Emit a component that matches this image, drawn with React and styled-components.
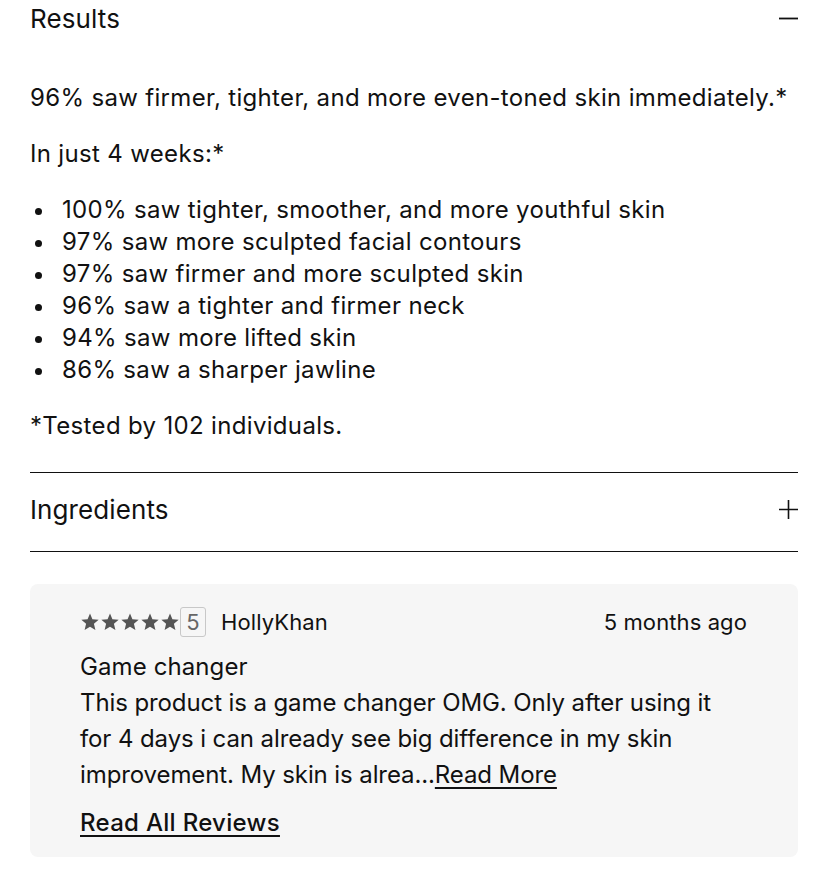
import React from "react";
import styled, { createGlobalStyle } from "styled-components";

const GlobalStyle = createGlobalStyle`
  body {
    margin: 0;
    background: #fff;
    color: #111;
    font-family: Inter, "Liberation Sans", sans-serif;
  }
`;

const Page = styled.div`
  padding: 0 30px;
`;

const Section = styled.div`
  border-bottom: ${({ last }) => (last ? "1px solid #111" : "none")};
  border-top: ${({ divided }) => (divided ? "1px solid #111" : "none")};
`;

const Header = styled.div`
  display: flex;
  align-items: center;
  justify-content: space-between;
  box-sizing: border-box;
  height: ${({ h }) => h}px;
  padding-bottom: ${({ lift = 0 }) => lift}px;
  font-size: 26px;
  letter-spacing: 0.1px;
`;

const Body = styled.div`
  font-size: 24px;
  line-height: 32px;
  padding: 46px 0 30px;
  letter-spacing: 0.33px;
`;

const Para = styled.p`
  margin: 0 0 24px;
  &:last-child {
    margin-bottom: 0;
  }
`;

const List = styled.ul`
  margin: 0 0 24px;
  padding: 0;
  list-style: none;
`;

const Item = styled.li`
  display: flex;
  align-items: center;
  &::before {
    content: "";
    flex: none;
    width: 7px;
    height: 7px;
    margin: 2px 20px 0 5px;
    border-radius: 50%;
    background: #111;
  }
`;

const Card = styled.div`
  margin-top: 32px;
  background: #f6f6f6;
  border-radius: 8px;
  padding: 22px 51px 18px 50px;
`;

const Meta = styled.div`
  display: flex;
  align-items: center;
  height: 32px;
  font-size: 22px;
  letter-spacing: 0.1px;
`;

const Stars = styled.div`
  display: flex;
  color: #555;
`;

const Badge = styled.span`
  display: inline-flex;
  align-items: flex-end;
  justify-content: center;
  box-sizing: border-box;
  width: 26px;
  height: 30px;
  border: 1.5px solid #c8c8c8;
  border-radius: 3px;
  color: #666;
  font-size: 22px;
  line-height: 27px;
`;

const Author = styled.span`
  margin-left: 15px;
`;

const Time = styled.span`
  margin-left: auto;
`;

const Title = styled.div`
  font-size: 24px;
  line-height: 36px;
  margin-top: 11px;
  letter-spacing: 0.1px;
`;

const Text = styled.div`
  font-size: 24px;
  line-height: 36px;
  letter-spacing: -0.1px;
`;

const Link = styled.a`
  color: #111;
  text-decoration: underline;
  text-underline-offset: 4px;
  text-decoration-thickness: 2px;
`;

const AllReviews = styled(Link)`
  display: inline-block;
  margin-top: 14px;
  font-weight: 500;
  font-size: 24px;
  line-height: 32px;
  letter-spacing: 0.3px;
`;

const Star = () => (
  <svg width="20" height="20" viewBox="0 0 24 24">
    <path
      fill="currentColor"
      d="M12 1.8l2.9 6.9 7.5.6-5.7 4.9 1.8 7.3L12 17.6l-6.5 3.9 1.8-7.3-5.7-4.9 7.5-.6z"
    />
  </svg>
);

const Minus = () => (
  <svg width="19" height="19" viewBox="0 0 19 19">
    <path d="M0 9.5h19" stroke="#111" strokeWidth="1.8" />
  </svg>
);

const Plus = () => (
  <svg width="19" height="19" viewBox="0 0 19 19">
    <path d="M0 9.5h19M9.5 0v19" stroke="#111" strokeWidth="1.6" />
  </svg>
);

const bullets = [
  "100% saw tighter, smoother, and more youthful skin",
  "97% saw more sculpted facial contours",
  "97% saw firmer and more sculpted skin",
  "96% saw a tighter and firmer neck",
  "94% saw more lifted skin",
  "86% saw a sharper jawline",
];

export default function App() {
  return (
    <Page>
      <GlobalStyle />
      <Section>
        <Header h={36}>
          <span>Results</span>
          <Minus />
        </Header>
        <Body>
          <Para>96% saw firmer, tighter, and more even-toned skin immediately.*</Para>
          <Para>In just 4 weeks:*</Para>
          <List>
            {bullets.map((b) => (
              <Item key={b}>{b}</Item>
            ))}
          </List>
          <Para>*Tested by 102 individuals.</Para>
        </Body>
      </Section>
      <Section divided last>
        <Header h={78} lift={5}>
          <span>Ingredients</span>
          <Plus />
        </Header>
      </Section>
      <Card>
        <Meta>
          <Stars>
            {[0, 1, 2, 3, 4].map((i) => (
              <Star key={i} />
            ))}
          </Stars>
          <Badge>5</Badge>
          <Author>HollyKhan</Author>
          <Time>5 months ago</Time>
        </Meta>
        <Title>Game changer</Title>
        <Text>
          This product is a game changer OMG. Only after using it for 4 days i can already
          see big difference in my skin improvement. My skin is alrea...
          <Link href="#">Read More</Link>
        </Text>
        <AllReviews href="#">Read All Reviews</AllReviews>
      </Card>
    </Page>
  );
}
